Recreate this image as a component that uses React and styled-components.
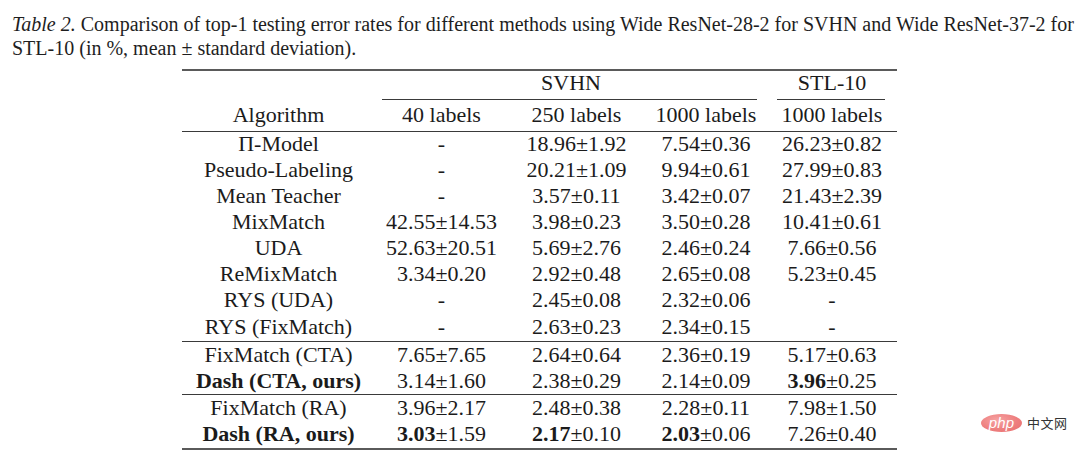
import React from 'react';
import styled, { createGlobalStyle } from 'styled-components';

const GlobalStyle = createGlobalStyle`
  html, body {
    margin: 0;
    padding: 0;
    background: #ffffff;
  }
`;

const Page = styled.div`
  position: relative;
  width: 1080px;
  height: 457px;
  padding: 12px 0 0 12px;
  box-sizing: border-box;
  font-family: "Liberation Serif", "Times New Roman", serif;
  color: #1b1b1b;
  overflow: hidden;
`;

const Caption = styled.p`
  margin: 0;
  font-size: 20px;
  line-height: 24px;
  white-space: nowrap;
  color: #1e1e1e;
  em {
    font-style: italic;
  }
`;

const TableWrap = styled.div`
  margin: 9px 0 0 170px;
  width: 715px;
  font-size: 22px;
  border-top: 2px solid #5a5a5a;
  border-bottom: 2px solid #5a5a5a;
`;

const cols = '193px 133px 137px 122px 130px';

const GroupRow = styled.div`
  display: grid;
  grid-template-columns: ${cols};
  height: 29px;
`;

const GroupCell = styled.div`
  grid-column: ${p => p.$span};
  display: flex;
  flex-direction: column;
  justify-content: space-between;
  align-items: stretch;
  text-align: center;
  line-height: 24px;
`;

const CMidRule = styled.div`
  height: 0;
  border-bottom: 1px solid #3a3a3a;
  margin: 0 ${p => p.$right}px 0 ${p => p.$left}px;
`;

const Row = styled.div`
  display: grid;
  grid-template-columns: ${cols};
  height: ${p => p.$h || 26}px;
  align-items: center;
  border-bottom: ${p => (p.$rule ? '1px solid #3a3a3a' : 'none')};
  box-sizing: border-box;
  line-height: 22px;
`;

const Cell = styled.div`
  text-align: center;
  white-space: nowrap;
  font-weight: ${p => (p.$bold ? 700 : 400)};
  margin-top: -2px;
`;

const Watermark = styled.div`
  position: absolute;
  left: 981px;
  top: 413px;
  display: flex;
  align-items: center;
  gap: 5px;
`;

const PhpBadge = styled.div`
  width: 41px;
  height: 18px;
  border-radius: 50%;
  background: radial-gradient(ellipse at 40% 35%, #f6a3a3 0%, #ee7f7f 55%, #e76c6c 100%);
  color: #ffffff;
  font-family: "Liberation Sans", Arial, sans-serif;
  font-style: italic;
  font-size: 15px;
  line-height: 18px;
  text-align: center;
  letter-spacing: 0.2px;
`;

const CnText = styled.span`
  font-family: "Noto Sans CJK SC", sans-serif;
  font-size: 13px;
  color: #333333;
  letter-spacing: 0.5px;
`;

const V = ({ v }) => {
  if (v === '-') return '-';
  const [a, b, bold] = v;
  return bold ? (<><b>{a}</b>±{b}</>) : `${a}±${b}`;
};

const rows = [
  ['Π-Model', '-', ['18.96', '1.92'], ['7.54', '0.36'], ['26.23', '0.82']],
  ['Pseudo-Labeling', '-', ['20.21', '1.09'], ['9.94', '0.61'], ['27.99', '0.83']],
  ['Mean Teacher', '-', ['3.57', '0.11'], ['3.42', '0.07'], ['21.43', '2.39']],
  ['MixMatch', ['42.55', '14.53'], ['3.98', '0.23'], ['3.50', '0.28'], ['10.41', '0.61']],
  ['UDA', ['52.63', '20.51'], ['5.69', '2.76'], ['2.46', '0.24'], ['7.66', '0.56']],
  ['ReMixMatch', ['3.34', '0.20'], ['2.92', '0.48'], ['2.65', '0.08'], ['5.23', '0.45']],
  ['RYS (UDA)', '-', ['2.45', '0.08'], ['2.32', '0.06'], '-'],
  ['RYS (FixMatch)', '-', ['2.63', '0.23'], ['2.34', '0.15'], '-'],
];

const cta = [
  ['FixMatch (CTA)', false, ['7.65', '7.65'], ['2.64', '0.64'], ['2.36', '0.19'], ['5.17', '0.63']],
  ['Dash (CTA, ours)', true, ['3.14', '1.60'], ['2.38', '0.29'], ['2.14', '0.09'], ['3.96', '0.25', true]],
];

const ra = [
  ['FixMatch (RA)', false, ['3.96', '2.17'], ['2.48', '0.38'], ['2.28', '0.11'], ['7.98', '1.50']],
  ['Dash (RA, ours)', true, ['3.03', '1.59', true], ['2.17', '0.10', true], ['2.03', '0.06', true], ['7.26', '0.40']],
];

const Group = ({ data, last }) => (
  <>
    {data.map(([name, bold, ...vals], i) => (
      <Row key={name} $h={i === 0 ? 27 : 26} $rule={!last && i === data.length - 1}>
        <Cell $bold={bold}>{name}</Cell>
        {vals.map((v, j) => (
          <Cell key={j}><V v={v} /></Cell>
        ))}
      </Row>
    ))}
  </>
);

export default function App() {
  return (
    <Page>
      <GlobalStyle />
      <Caption>
        <em>Table 2.</em> Comparison of top-1 testing error rates for different methods using Wide ResNet-28-2 for SVHN and Wide ResNet-37-2 for
        <br />
        STL-10 (in %, mean ± standard deviation).
      </Caption>

      <TableWrap>
        <GroupRow>
          <GroupCell $span="2 / 5">
            <span>SVHN</span>
            <CMidRule $left={7} $right={10} />
          </GroupCell>
          <GroupCell $span="5 / 6">
            <span>STL-10</span>
            <CMidRule $left={10} $right={12} />
          </GroupCell>
        </GroupRow>
        <Row $h={32} $rule>
          <Cell>Algorithm</Cell>
          <Cell>40 labels</Cell>
          <Cell>250 labels</Cell>
          <Cell>1000 labels</Cell>
          <Cell>1000 labels</Cell>
        </Row>
        {rows.map(([name, ...vals], i) => (
          <Row key={name} $h={i === 7 ? 28 : 26} $rule={i === 7}>
            <Cell>{name}</Cell>
            {vals.map((v, j) => (
              <Cell key={j}><V v={v} /></Cell>
            ))}
          </Row>
        ))}
        <Group data={cta} />
        <Group data={ra} last />
      </TableWrap>

      <Watermark>
        <PhpBadge>php</PhpBadge>
        <CnText>中文网</CnText>
      </Watermark>
    </Page>
  );
}
